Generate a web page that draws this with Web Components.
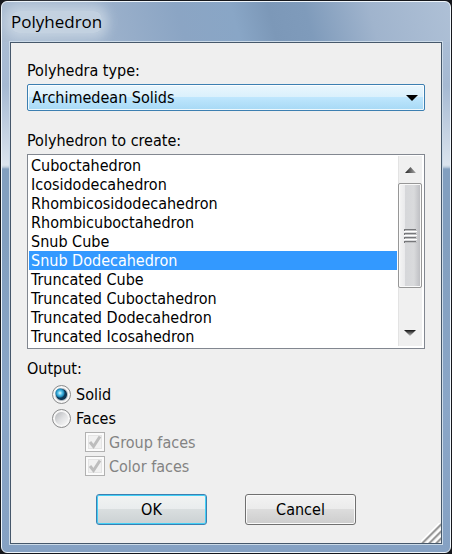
<!DOCTYPE html>
<html lang="en">
<head>
<meta charset="utf-8">
<title>Polyhedron</title>
<style>
html{height:100%}
body{margin:0;min-height:100%;display:grid;background:#15171c;font:16px/19px "DejaVu Sans Condensed","Noto Sans",sans-serif;color:#000}
</style>
</head>
<body>
<dialog-window caption="Polyhedron">
  <labelled-field caption="Polyhedra type:"><drop-down label="Polyhedra type:"></drop-down></labelled-field>
  <labelled-field caption="Polyhedron to create:"><list-box label="Polyhedron to create:"></list-box></labelled-field>
  <output-options></output-options>
  <action-bar slot="actions"></action-bar>
</dialog-window>
<script>
const define = (name, html, setup) => {
  const template = document.createElement('template');
  template.innerHTML = html;
  customElements.define(name, class extends HTMLElement {
    constructor() {
      super();
      this.attachShadow({mode: 'open'}).append(template.content.cloneNode(true));
    }
    connectedCallback() {
      if (setup) setup(this, this.shadowRoot);
    }
  });
};

define('dialog-window', `
<style>
:host{display:flex;flex-direction:column;box-sizing:border-box;margin:1px;padding:0 8px 8px;border:1px solid #eef5fb;border-radius:6px;
  background:
    linear-gradient(75deg,#a9bbd1 0,#9db2cc 22%,#8ba5c4 40%,#89a6c6 52%,#7c98b8 60%,#7f9bbb 68%,#a0b4cd 82%,#aec0d6 100%) 0 0/100% 40px no-repeat,
    linear-gradient(#aec0d6 0,#a5b9d2 84px,#dbe4ee 163px,#c0cfdf 165px,#829fbf 167px,#829fbf 240px,#8aa6c7 400px,#85a1c3 100%)}
header{height:40px;display:flex;align-items:center;padding:0 1px;box-sizing:border-box}
h1{margin:0;font:400 17px/22px "Open Sans","Noto Sans",sans-serif;background:#dbe4ed99;box-shadow:0 0 12px 6px #dbe4ed99;border-radius:8px}
main{flex:1;display:flex;flex-direction:column;gap:20px;box-sizing:border-box;padding:18px 16px;background:#efefef;border:1px solid #46586b;outline:1px solid #cbdae8;position:relative}
slot[name=actions]{display:block}
svg{position:absolute;right:0;bottom:0}
</style>
<header><h1></h1></header>
<main><slot></slot><slot name="actions"></slot>
<svg width="20" height="20" viewBox="0 0 20 20" fill="none" stroke-width="2"><path stroke="#fff" d="M-1 20 20-1M6 20 20 6M13 20 20 13"/><path stroke="#999" d="M1 20.500 20.500 1M8 20.500 20.500 8M15 20.500 20.500 15"/></svg>
</main>`, (el, root) => { root.querySelector('h1').textContent = el.getAttribute('caption'); });

define('labelled-field', `
<style>
:host{display:flex;flex-direction:column;gap:4px}
</style>
<span></span><slot></slot>`, (el, root) => { root.querySelector('span').textContent = el.getAttribute('caption'); });

define('drop-down', `
<style>
:host{display:grid}
select,svg{grid-area:1/1}
select{appearance:none;box-sizing:border-box;width:100%;height:27px;margin:0;padding:0 28px 0 4px;font:inherit;color:#000;border:1px solid #3c7fb1;border-radius:2px;box-shadow:inset 0 0 0 1px #ffffffcc;
  background:linear-gradient(#eaf6fd 0,#d9f0fc 50%,#bee6fd 50%,#a7d9f5 100%);outline:0}
svg{place-self:center end;margin-right:7px;pointer-events:none}
</style>
<select><option selected>Archimedean Solids</option></select>
<svg width="12" height="6" viewBox="0 0 12 6"><path d="M0 0h12L6 6z"/></svg>`,
(el, root) => { root.querySelector('select').setAttribute('aria-label', el.getAttribute('label')); });

define('scroll-strip', `
<style>
:host{display:flex;flex-direction:column;width:24px;background:#f0f0f0;box-shadow:inset 1px 0 #e3e3e3}
button{height:27px;border:0;padding:0;margin:0;background:none;display:grid;place-items:center;flex:none}
.track{flex:1}
.thumb{box-sizing:border-box;height:105px;border:1px solid #979797;border-radius:2px;box-shadow:inset 0 0 0 1px #fafafa;display:grid;place-items:center;
  background:linear-gradient(90deg,#f5f5f5 0,#e9e9eb 28%,#d6d7da 29%,#d9dadc 68%,#bfc0c4 95%)}
</style>
<button aria-label="Scroll up"><svg width="11" height="6" viewBox="0 0 11 6"><defs><linearGradient id="u"><stop stop-color="#222"/><stop offset="1" stop-color="#aaa"/></linearGradient></defs><path fill="url(#u)" d="M0 6 5.500 0 11 6z"/></svg></button>
<div class="track"><div class="thumb"><svg width="13" height="14" viewBox="0 0 13 14"><path fill="#fff" d="M0 1h13v2H0zM0 5h13v2H0zM0 9h13v2H0zM0 13h13v1H0z"/><path fill="#77787b" d="M0 0h12v2H0zM0 4h12v2H0zM0 8h12v2H0zM0 12h12v2H0z"/><path fill="#bfc0c2" d="M1 1h12v1H1zM1 5h12v1H1zM1 9h12v1H1zM1 13h12v1H1z"/></svg></div></div>
<button aria-label="Scroll down"><svg width="12" height="6" viewBox="0 0 12 6"><defs><linearGradient id="d" x2="0" y2="1"><stop stop-color="#111"/><stop offset="1" stop-color="#bbb"/></linearGradient></defs><path fill="url(#d)" d="M0 0h12L6 6z"/></svg></button>`);

define('list-box', `
<style>
:host{display:flex;box-sizing:border-box;padding:1px 2px 2px 1px;background:#fff;border:1px solid #828790}
select{flex:1;min-width:0;height:190px;margin:0;padding:0;border:0;outline:0;overflow:hidden;background:#fff;font:inherit;color:#000;scrollbar-width:none}
option{padding:0 2px;height:19px;min-height:19px;line-height:19px;box-sizing:border-box}
option:checked{background:#3399ff linear-gradient(#3399ff,#3399ff);color:#fff;-webkit-text-fill-color:#fff}
scroll-strip{margin-left:1px}
</style>
<select size="10">
<option>Cuboctahedron</option><option>Icosidodecahedron</option><option>Rhombicosidodecahedron</option><option>Rhombicuboctahedron</option><option>Snub Cube</option><option selected>Snub Dodecahedron</option><option>Truncated Cube</option><option>Truncated Cuboctahedron</option><option>Truncated Dodecahedron</option><option>Truncated Icosahedron</option>
</select><scroll-strip></scroll-strip>`,
(el, root) => { root.querySelector('select').setAttribute('aria-label', el.getAttribute('label')); });

define('output-options', `
<style>
:host{display:block;margin-top:-10px}
fieldset{border:0;margin:0;padding:0;display:flex;flex-direction:column}
legend{padding:0;margin:0 0 4px}
label{display:flex;align-items:center;gap:5px;height:24px;margin-left:25px}
label.sub{margin-left:58px;gap:4px;color:#838383}
input{appearance:none;box-sizing:border-box;margin:0;width:19px;height:19px;flex:none}
input[type=radio]{border:1px solid #8a8b8c;border-radius:50%;background:radial-gradient(circle,#fff0 0,#fff0 6px,#f6f6f6 7px),linear-gradient(135deg,#bcbec1 20%,#dedfe1 50%,#f4f4f4 80%)}
input[type=radio]:checked{background:radial-gradient(circle at 7px 7px,#e8fbff 0,#5cc6ec 2px,#1b86b8 4px,#12405f00 5px),radial-gradient(circle,#123f5e 0,#0d3553 5px,#b4bcc3 6px,#f6f6f6 7px)}
.tick{display:grid}
.tick>*{grid-area:1/1}
input[type=checkbox]{width:20px;height:20px;border:1px solid #b1b1b1;background:#f1f1f1;box-shadow:inset 0 0 0 2px #fbfbfb,inset 0 0 0 3px #e4e4e4}
svg{pointer-events:none}
</style>
<fieldset><legend>Output:</legend>
<label><input type="radio" name="output" checked>Solid</label>
<label><input type="radio" name="output">Faces</label>
<label class="sub"><span class="tick"><input type="checkbox" checked disabled><svg width="20" height="20" viewBox="0 0 20 20" fill="none" stroke="#bdbdbd" stroke-width="3"><path d="M5 10 8.500 14.500 15 4.500"/></svg></span>Group faces</label>
<label class="sub"><span class="tick"><input type="checkbox" checked disabled><svg width="20" height="20" viewBox="0 0 20 20" fill="none" stroke="#bdbdbd" stroke-width="3"><path d="M5 10 8.500 14.500 15 4.500"/></svg></span>Color faces</label>
</fieldset>`);

define('action-bar', `
<style>
:host{display:flex;justify-content:center;gap:38px;margin-top:-4px}
button{box-sizing:border-box;width:111px;height:31px;margin:0;padding:0;font:inherit;color:#000;border:1px solid #707070;border-radius:3px;box-shadow:inset 0 0 0 1px #fafafa;
  background:linear-gradient(#f3f3f3 0,#ebebeb 50%,#dcdcdc 50%,#cdcdcd 100%)}
.default{border-color:#3c7fb1;box-shadow:inset 0 0 0 1px #43d0f6;background:linear-gradient(#f1f3f3 0,#e9eced 50%,#d9dedf 50%,#cbd1d3 100%)}
</style>
<button class="default">OK</button><button>Cancel</button>`);
</script>
</body>
</html>
